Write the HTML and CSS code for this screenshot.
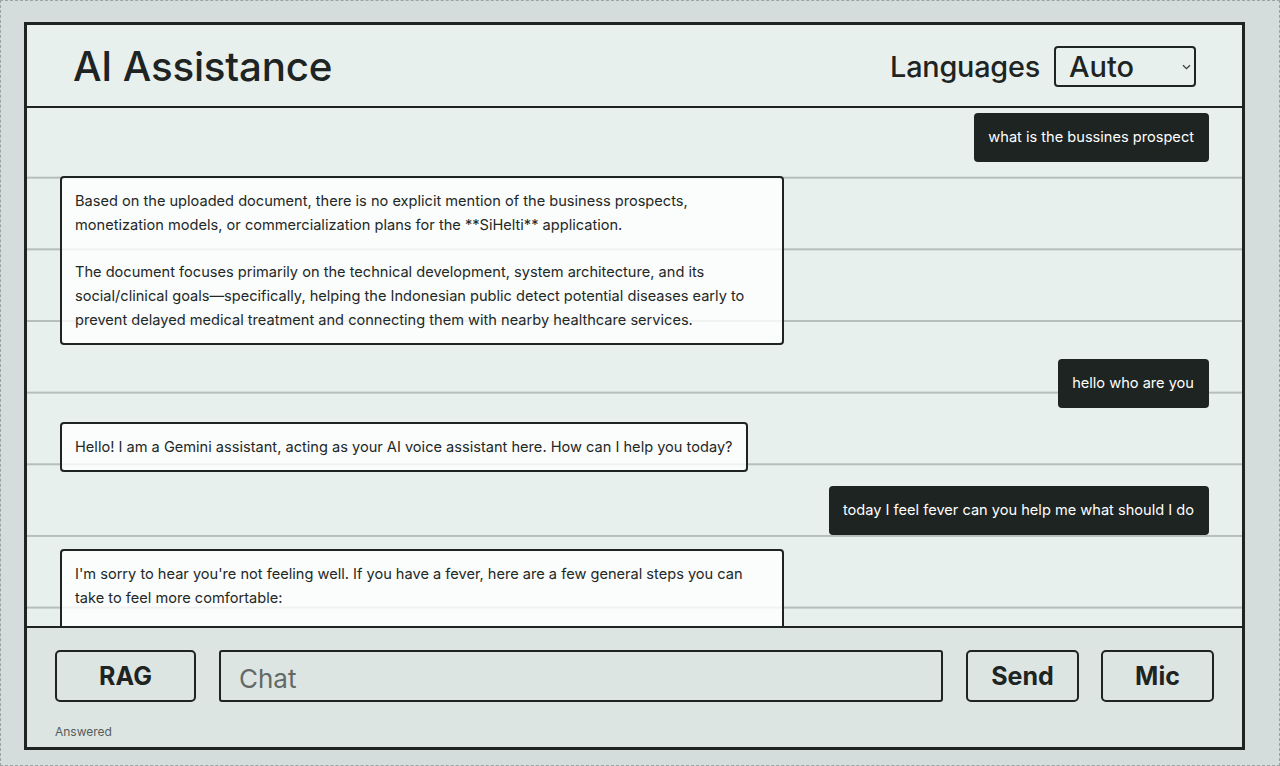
FILE: index.html
```html
<!DOCTYPE html>
<html lang="en">
<head>
<meta charset="utf-8">
<title>AI Assistance</title>
<link rel="stylesheet" href="styles.css">
</head>
<body>
<div class="page">
  <div class="app">
    <header class="header">
      <h1 class="title">AI Assistance</h1>
      <div class="lang">
        <span class="lang-label">Languages</span>
        <div class="select-wrap">
          <select class="select">
            <option>Auto</option>
            <option>English</option>
            <option>Indonesia</option>
          </select>
          <svg class="chev" width="9" height="6" viewBox="0 0 9 6"><path d="M1 1.2 L4.5 4.6 L8 1.2" fill="none" stroke="#3a403e" stroke-width="1.3"/></svg>
        </div>
      </div>
    </header>
    <main class="chat">
      <div class="msg user">what is the bussines prospect</div>
      <div class="msg bot">
        <p>Based on the uploaded document, there is no explicit mention of the business prospects, monetization models, or commercialization plans for the **SiHelti** application.</p>
        <p>The document focuses primarily on the technical development, system architecture, and its social/clinical goals—specifically, helping the Indonesian public detect potential diseases early to prevent delayed medical treatment and connecting them with nearby healthcare services.</p>
      </div>
      <div class="msg user">hello who are you</div>
      <div class="msg bot">
        <p>Hello! I am a Gemini assistant, acting as your AI voice assistant here. How can I help you today?</p>
      </div>
      <div class="msg user">today I feel fever can you help me what should I do</div>
      <div class="msg bot">
        <p>I'm sorry to hear you're not feeling well. If you have a fever, here are a few general steps you can take to feel more comfortable:</p>
      </div>
    </main>
    <footer class="footer">
      <div class="controls">
        <button class="btn btn-rag">RAG</button>
        <input class="input" type="text" placeholder="Chat">
        <button class="btn btn-sm">Send</button>
        <button class="btn btn-sm">Mic</button>
      </div>
      <div class="status">Answered</div>
    </footer>
  </div>
</div>
</body>
</html>
```
FILE: styles.css
```css
* { box-sizing: border-box; }
html, body { margin: 0; padding: 0; }
body {
  background: #d4dddb;
  font-family: Inter, "Noto Sans", sans-serif;
  color: #1e2422;
}
.page {
  width: 1280px;
  height: 766px;
  border: 1px dashed #9ba4a1;
  padding: 21px 0 0 23px;
  overflow: hidden;
}
.app {
  width: 1221px;
  height: 728px;
  border: 3px solid #1e2422;
  display: flex;
  flex-direction: column;
  background: #e8f0ee;
}
.header {
  height: 83px;
  flex: none;
  border-bottom: 2px solid #1e2422;
  display: flex;
  align-items: center;
  justify-content: space-between;
  padding: 0 46px 0 46px;
  background: #e8f0ee;
}
.title {
  margin: 0;
  font-size: 40.3px;
  font-weight: 500;
  letter-spacing: -0.2px;
  color: #1e2422;
  padding-top: 1px;
}
.lang {
  display: flex;
  align-items: center;
  gap: 14px;
  padding-top: 2px;
}
.lang-label {
  font-size: 28.8px;
  font-weight: 500;
  letter-spacing: -0.2px;
}
.select-wrap {
  position: relative;
  width: 142px;
  height: 41px;
}
.select {
  appearance: none;
  -webkit-appearance: none;
  width: 100%;
  height: 100%;
  border: 2px solid #1e2422;
  border-radius: 4px;
  background: #e8f0ee;
  font-family: Inter, sans-serif;
  font-size: 29px;
  font-weight: 500;
  color: #1e2422;
  padding: 0 0 0 13px;
  line-height: 37px;
}
.chev {
  position: absolute;
  right: 5px;
  top: 18px;
}
.chat {
  flex: 1;
  min-height: 0;
  overflow: hidden;
  display: flex;
  flex-direction: column;
  align-items: flex-start;
  gap: 14px;
  padding: 5px 33px 0 33px;
  background-color: #e8f0ee;
  background-image: linear-gradient(to bottom, transparent 0, transparent 69px, #b6bebb 69px, #b6bebb 71px, transparent 71px);
  background-size: 100% 71.67px;
  background-repeat: repeat-y;
}
.msg {
  font-size: 14.6px;
  line-height: 24px;
  flex: none;
}
.msg p { margin: 0; }
.msg p + p { margin-top: 23px; }
.user {
  align-self: flex-end;
  background: #1e2422;
  color: #ffffff;
  border-radius: 4px;
  padding: 12px 15px 13px 14px;
}
.bot {
  max-width: 724px;
  background: rgba(255, 255, 255, 0.8);
  border: 2px solid #1e2422;
  border-radius: 4px;
  padding: 11px 13px 11px;
  color: #222826;
}
.bot:last-child {
  min-height: 90px;
}
.footer {
  height: 121px;
  flex: none;
  border-top: 2px solid #1e2422;
  background: #dde5e2;
  padding: 22px 28px 0 28px;
}
.controls {
  display: flex;
  gap: 23px;
  height: 52px;
}
.btn {
  flex: none;
  height: 52px;
  border: 2px solid #1e2422;
  border-radius: 5px;
  background: transparent;
  font-family: Inter, sans-serif;
  font-weight: 700;
  font-size: 25px;
  color: #1e2422;
  padding: 0;
}
.btn-rag { width: 141px; }
.btn-sm { width: 113px; }
.controls .btn-sm:last-child { margin-left: -1px; }
.input {
  flex: 1;
  min-width: 0;
  height: 52px;
  border: 2px solid #1e2422;
  border-radius: 3px;
  background: #dde5e2;
  font-family: Inter, sans-serif;
  font-size: 26px;
  color: #1e2422;
  padding: 4px 18px 0;
}
.input::placeholder { color: #626967; }
.status {
  margin-top: 22px;
  font-size: 12px;
  line-height: 16px;
  color: #555c5a;
}
```
